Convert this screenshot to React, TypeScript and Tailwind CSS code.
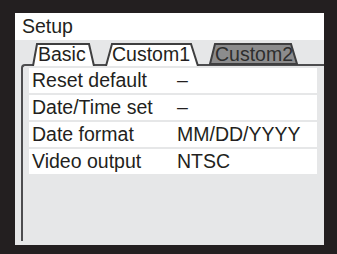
const rows = [
  { label: 'Reset default', value: '–' },
  { label: 'Date/Time set', value: '–' },
  { label: 'Date format', value: 'MM/DD/YYYY' },
  { label: 'Video output', value: 'NTSC' },
];

const tabs = [
  { name: 'Basic', width: 63, inset: 5, textLeft: 6, active: true },
  { name: 'Custom1', width: 94, inset: 7, textLeft: 7, active: true },
  { name: 'Custom2', width: 89, inset: 6, textLeft: 6, active: false },
];

function Tab({ tab }: { tab: (typeof tabs)[number] }) {
  const w = tab.width;
  const top = `${tab.inset},1 ${w - tab.inset - 1},1`;
  return (
    <div className="relative z-10 h-[23px] shrink-0" style={{ width: w }}>
      <svg className="absolute inset-0" width={w} height={23} viewBox={`0 0 ${w} 23`}>
        {tab.active ? (
          <polyline
            points={`1,23 ${top} ${w - 1},23`}
            fill="#ffffff"
            stroke="#3f3f40"
            strokeWidth={2}
          />
        ) : (
          <polygon
            points={`1,21 ${top} ${w - 1},21`}
            fill="#8c8c8d"
            stroke="#3f3f40"
            strokeWidth={2}
          />
        )}
      </svg>
      <span
        className={`relative block text-[19.5px] leading-[21px] pt-[1px] ${
          tab.active ? 'text-[#231f20]' : 'text-[#2e2e2e]'
        }`}
        style={{ paddingLeft: tab.textLeft }}
      >
        {tab.name}
      </span>
    </div>
  );
}

export default function App() {
  return (
    <div
      className="w-[337px] h-[254px] bg-[#231f20] pt-[13px] pl-[15px] pr-[13px] pb-[9px]"
      style={{ fontFamily: '"Liberation Sans", Arial, sans-serif' }}
    >
      <div className="flex flex-col h-full">
        {/* Title */}
        <div className="h-[27px] bg-white pl-[7px] text-[19.5px] leading-[27px] text-[#231f20]">
          Setup
        </div>

        {/* Body */}
        <div className="flex-1 flex flex-col bg-[#e6e7e8]">
          <div className="flex pt-[3px] pl-[17px] gap-[10px]">
            {tabs.map((t) => (
              <Tab key={t.name} tab={t} />
            ))}
          </div>

          <div className="flex-1 mt-[-2px] ml-[6px] mb-[4px] border-l-2 border-t-2 border-[#4d4d4f] rounded-tl-[4px]">
            <div className="flex flex-col gap-[2px] mt-[2px] ml-[6px] mr-[7px]">
              {rows.map((r) => (
                <div
                  key={r.label}
                  className="flex h-[25px] bg-white pl-[3px] text-[19.5px] leading-[25px] text-[#231f20]"
                >
                  <span className="w-[145px] shrink-0">{r.label}</span>
                  <span>{r.value}</span>
                </div>
              ))}
            </div>
          </div>
        </div>
      </div>
    </div>
  );
}
